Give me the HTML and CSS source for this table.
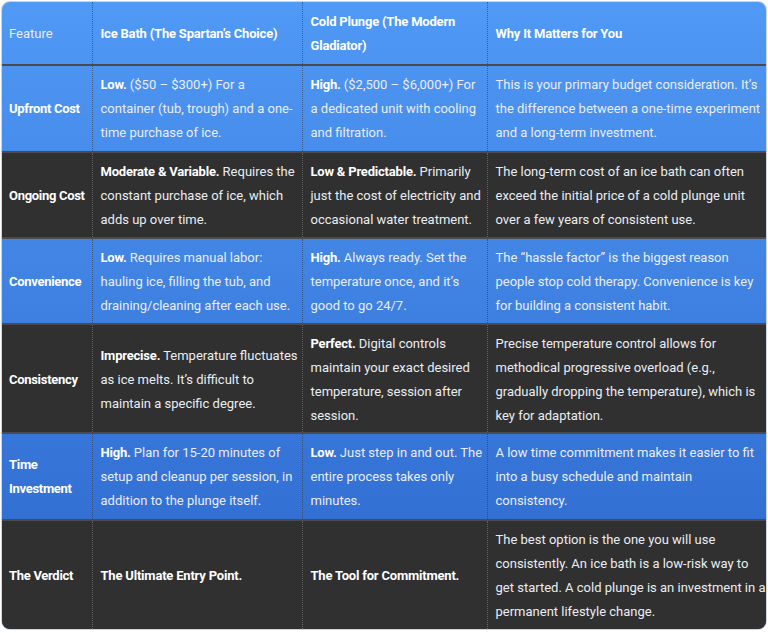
FILE: index.html
```html
<!DOCTYPE html>
<html>
<head>
<meta charset="utf-8">
<link rel="stylesheet" href="styles.css">
</head>
<body>
<div class="wrap">
<table class="cmp">
  <colgroup>
    <col class="c1"><col class="c2"><col class="c3"><col class="c4">
  </colgroup>
  <thead>
    <tr class="blue head">
      <th class="plain">Feature</th>
      <th>Ice Bath (The Spartan’s Choice)</th>
      <th>Cold Plunge (The Modern<br>Gladiator)</th>
      <th>Why It Matters for You</th>
    </tr>
  </thead>
  <tbody>
    <tr class="blue">
      <th>Upfront Cost</th>
      <td><b>Low.</b> ($50 – $300+) For a<br>container (tub, trough) and a one-<br>time purchase of ice.</td>
      <td><b>High.</b> ($2,500 – $6,000+) For<br>a dedicated unit with cooling<br>and filtration.</td>
      <td>This is your primary budget consideration. It’s<br>the difference between a one-time experiment<br>and a long-term investment.</td>
    </tr>
    <tr class="dark short">
      <th>Ongoing Cost</th>
      <td><b>Moderate &amp; Variable.</b> Requires the<br>constant purchase of ice, which<br>adds up over time.</td>
      <td><b>Low &amp; Predictable.</b> Primarily<br>just the cost of electricity and<br>occasional water treatment.</td>
      <td>The long-term cost of an ice bath can often<br>exceed the initial price of a cold plunge unit<br>over a few years of consistent use.</td>
    </tr>
    <tr class="blue short">
      <th>Convenience</th>
      <td><b>Low.</b> Requires manual labor:<br>hauling ice, filling the tub, and<br>draining/cleaning after each use.</td>
      <td><b>High.</b> Always ready. Set the<br>temperature once, and it’s<br>good to go 24/7.</td>
      <td>The “hassle factor” is the biggest reason<br>people stop cold therapy. Convenience is key<br>for building a consistent habit.</td>
    </tr>
    <tr class="dark four">
      <th>Consistency</th>
      <td><b>Imprecise.</b> Temperature fluctuates<br>as ice melts. It’s difficult to<br>maintain a specific degree.</td>
      <td><b>Perfect.</b> Digital controls<br>maintain your exact desired<br>temperature, session after<br>session.</td>
      <td>Precise temperature control allows for<br>methodical progressive overload (e.g.,<br>gradually dropping the temperature), which is<br>key for adaptation.</td>
    </tr>
    <tr class="blue">
      <th>Time<br>Investment</th>
      <td><b>High.</b> Plan for 15-20 minutes of<br>setup and cleanup per session, in<br>addition to the plunge itself.</td>
      <td><b>Low.</b> Just step in and out. The<br>entire process takes only<br>minutes.</td>
      <td>A low time commitment makes it easier to fit<br>into a busy schedule and maintain<br>consistency.</td>
    </tr>
    <tr class="dark four last">
      <th>The Verdict</th>
      <td><b>The Ultimate Entry Point.</b></td>
      <td><b>The Tool for Commitment.</b></td>
      <td>The best option is the one you will use<br>consistently. An ice bath is a low-risk way to<br>get started. A cold plunge is an investment in a<br>permanent lifestyle change.</td>
    </tr>
  </tbody>
</table>
</div>
</body>
</html>
```
FILE: styles.css
```css
html, body {
  margin: 0;
  padding: 0;
  background: #ffffff;
}
.wrap {
  margin: 1px 1px 0 1px;
  width: 764px;
  border: 1px solid #cfd3da;
  border-radius: 9px;
  overflow: hidden;
  background: linear-gradient(to bottom, #5099f5 0%, #2c67cc 100%);
}
.cmp {
  width: 100%;
  border-collapse: collapse;
  table-layout: fixed;
  font-family: Roboto, "Liberation Sans", sans-serif;
  font-size: 13px;
  line-height: 24px;
  color: #e9edf3;
}
.c1 { width: 90px; }
.c2 { width: 210px; }
.c3 { width: 185px; }
.c4 { width: auto; }
.cmp th, .cmp td {
  padding: 7px 8px 6px 8px;
  text-align: left;
  vertical-align: middle;
  white-space: nowrap;
  border-left: 1px dotted rgba(40, 50, 70, 0.55);
}
.cmp th:first-child {
  border-left: none;
  padding-left: 7px;
  padding-right: 2px;
  letter-spacing: -0.3px;
}
.cmp th {
  color: #ffffff;
  font-weight: bold;
  letter-spacing: -0.2px;
}
.cmp th.plain {
  font-weight: normal;
  letter-spacing: 0;
  color: #e6eefc;
}
.cmp td b {
  color: #ffffff;
  font-weight: bold;
  letter-spacing: -0.2px;
}
.cmp tr { border-bottom: 2px solid #4b4b4b; }
.cmp tr.last { border-bottom: none; }
.cmp .short th, .cmp .short td { padding-bottom: 5px; }
.cmp .four th, .cmp .four td { padding-bottom: 4px; }
.cmp .last th, .cmp .last td { padding-bottom: 5px; }
.head th { padding-top: 8px; padding-bottom: 6px; }
.dark { background: #303030; }
.dark th, .dark td { border-left-color: rgba(120, 120, 120, 0.7); }
```
